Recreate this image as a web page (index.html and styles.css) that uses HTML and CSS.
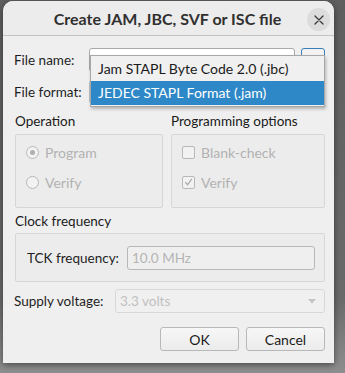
FILE: index.html
```html
<!DOCTYPE html>
<html>
<head>
<meta charset="utf-8">
<link rel="stylesheet" href="styles.css">
</head>
<body>
<div class="window">
  <div class="titlebar">
    <span class="title">Create JAM, JBC, SVF or ISC file</span>
    <span class="close">
      <svg width="10" height="10" viewBox="0 0 10 10"><path d="M1 1L9 9M9 1L1 9" stroke="#3a3a3a" stroke-width="1.3" stroke-linecap="round"/></svg>
    </span>
  </div>
  <div class="content">
    <div class="row row-name">
      <span class="label lbl-name">File name:</span>
      <span class="field name-field"></span>
      <span class="browse"></span>
    </div>
    <div class="row row-format">
      <span class="label lbl-name">File format:</span>
      <span class="field format-field"></span>
    </div>
    <div class="popup">
      <div class="item">Jam STAPL Byte Code 2.0 (.jbc)</div>
      <div class="item selected">JEDEC STAPL Format (.jam)</div>
    </div>

    <div class="groups">
      <div class="group-col">
        <div class="heading">Operation</div>
        <div class="box opbox">
          <div class="opt"><span class="radio checked"></span><span>Program</span></div>
          <div class="opt"><span class="radio"></span><span>Verify</span></div>
        </div>
      </div>
      <div class="group-col">
        <div class="heading">Programming options</div>
        <div class="box opbox">
          <div class="opt"><span class="check"></span><span>Blank-check</span></div>
          <div class="opt"><span class="check"><svg width="12" height="12" viewBox="0 0 12 12"><path d="M2.5 6.2L5 9L9.5 2.5" fill="none" stroke="#a8a8a8" stroke-width="1.3"/></svg></span><span>Verify</span></div>
        </div>
      </div>
    </div>

    <div class="heading clock-heading">Clock frequency</div>
    <div class="box clockbox">
      <span class="label tck-label">TCK frequency:</span>
      <span class="field tck-field">10.0 MHz</span>
    </div>

    <div class="row supply-row">
      <span class="label supply-label">Supply voltage:</span>
      <span class="field supply-field">3.3 volts<svg class="arrow" width="8" height="5" viewBox="0 0 8 5"><path d="M0 0H8L4 4.5Z" fill="#c4c4c4"/></svg></span>
    </div>

    <div class="buttons">
      <span class="btn">OK</span>
      <span class="btn">Cancel</span>
    </div>
  </div>
</div>
</body>
</html>
```
FILE: styles.css
```css
html, body {
  margin: 0;
  padding: 0;
}
body {
  width: 345px;
  height: 373px;
  overflow: hidden;
  background: linear-gradient(to bottom, #5e5e5e 0%, #6a6a6a 80%, #8e8e8e 100%);
  font-family: Lato, "Noto Sans", sans-serif;
  font-size: 13.5px;
  color: #1e1e1e;
}
.window {
  margin-left: 3px;
  margin-top: 1px;
  width: 331px;
  height: 362px;
  background: #efefef;
  border-radius: 10px 10px 0 0;
  box-shadow: 0 2px 6px rgba(0,0,0,0.45);
  position: relative;
}
.titlebar {
  height: 34px;
  border-bottom: 1px solid #c4c4c4;
  background: #ececec;
  border-radius: 10px 10px 0 0;
  display: flex;
  align-items: center;
  justify-content: center;
  position: relative;
}
.title {
  font-weight: bold;
  font-size: 16px;
  color: #303030;
  margin-left: -2px;
  margin-top: 1px;
}
.close {
  position: absolute;
  right: 4px;
  top: 7px;
  width: 23px;
  height: 23px;
  border-radius: 50%;
  background: #dcdcdc;
  display: flex;
  align-items: center;
  justify-content: center;
}
.content {
  padding: 12px 9px 0 12px;
  position: relative;
}
.row {
  display: flex;
  align-items: center;
}
.label {
  white-space: nowrap;
}
.lbl-name {
  width: 75px;
  margin-left: -1px;
}
.field {
  display: block;
  box-sizing: border-box;
  height: 24px;
  border: 1px solid #bdbdbd;
  border-radius: 3px;
  background: #ffffff;
}
.name-field {
  width: 206px;
  border-color: #a9a9a9;
}
.browse {
  display: block;
  box-sizing: border-box;
  width: 24px;
  height: 24px;
  margin-left: 6px;
  border: 1px solid #3c7fb8;
  border-radius: 3px;
  background: #f2f2f2;
}
.row-name {
  height: 24px;
}
.row-format {
  height: 24px;
  margin-top: 8px;
}
.format-field {
  width: 235px;
}
.popup {
  position: absolute;
  left: 87px;
  top: 19px;
  width: 235px;
  box-sizing: border-box;
  border: 1px solid #a8a8a8;
  background: #f0f0f0;
  box-shadow: 1px 2px 3px rgba(0,0,0,0.25);
  padding: 1px 0 1px 0;
  z-index: 2;
}
.item {
  height: 24px;
  line-height: 24px;
  padding-left: 7px;
  font-size: 14px;
  color: #1a1a1a;
}
.item.selected {
  background: #2e88c7;
  color: #ffffff;
}
.groups {
  display: flex;
  gap: 8px;
  margin-top: 7px;
}
.group-col {
  flex: 0 0 auto;
}
.group-col:first-child {
  width: 148px;
}
.group-col:last-child {
  width: 154px;
}
.heading {
  height: 20px;
  line-height: 20px;
  font-size: 13.5px;
  color: #1a1a1a;
}
.box {
  box-sizing: border-box;
  border: 1px solid #d6d6d6;
  border-radius: 2px;
  background: #ececec;
}
.opbox {
  height: 74px;
  margin-top: 3px;
  padding: 2px 0 0 10px;
  color: #b2b2b2;
  font-size: 14px;
}
.opt {
  display: flex;
  align-items: center;
  height: 30px;
  gap: 6px;
}
.radio {
  width: 13px;
  height: 13px;
  box-sizing: border-box;
  border: 1px solid #b8b8b8;
  border-radius: 50%;
  background: #f2f2f2;
  display: flex;
  align-items: center;
  justify-content: center;
}
.radio.checked::after {
  content: "";
  width: 5px;
  height: 5px;
  border-radius: 50%;
  background: #b0b0b0;
}
.check {
  width: 13px;
  height: 13px;
  box-sizing: border-box;
  border: 1px solid #b8b8b8;
  border-radius: 2px;
  background: #f2f2f2;
  display: flex;
  align-items: center;
  justify-content: center;
}
.clock-heading {
  margin-top: 3px;
}
.clockbox {
  height: 49px;
  margin-top: 2px;
  display: flex;
  align-items: center;
  padding-left: 11px;
}
.tck-label {
  width: 100px;
}
.tck-field {
  width: 188px;
  padding-left: 4px;
  line-height: 22px;
  color: #b4b4b4;
  background: #efefef;
  border-color: #b8b8b8;
}
.supply-row {
  margin-top: 7px;
  height: 24px;
}
.supply-label {
  width: 101px;
  margin-left: -1px;
}
.supply-field {
  width: 210px;
  padding-left: 4px;
  line-height: 22px;
  color: #c0c0c0;
  background: #f0f0f0;
  border-color: #d8d8d8;
  position: relative;
}
.arrow {
  position: absolute;
  right: 8px;
  top: 9px;
}
.buttons {
  display: flex;
  justify-content: flex-end;
  gap: 7px;
  margin-top: 14px;
}
.btn {
  box-sizing: border-box;
  width: 79px;
  height: 24px;
  border: 1px solid #b8b8b8;
  border-radius: 3px;
  background: linear-gradient(#f7f7f7, #ececec);
  display: flex;
  align-items: center;
  justify-content: center;
  font-size: 14px;
  color: #1a1a1a;
}
```
